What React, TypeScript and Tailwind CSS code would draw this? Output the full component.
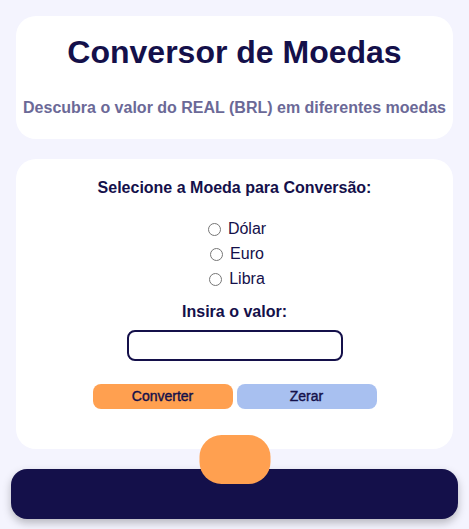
import React from "react";

export default function App() {
  const font = { fontFamily: '"Liberation Sans", Arial, sans-serif' };
  return (
    <div className="min-h-screen w-full bg-[#f4f4fe] pt-4 pb-[10px]" style={font}>
      <div className="mx-4 rounded-[20px] bg-white pt-[18px] pb-[22px] text-center">
        <h1 className="text-[32px] font-bold leading-[36px] text-[#14104a]">Conversor de Moedas</h1>
        <p className="mt-[29px] text-[16px] font-bold leading-[18px] text-[#6b6997]">
          Descubra o valor do REAL (BRL) em diferentes moedas
        </p>
      </div>

      <div className="mx-4 mt-5 rounded-[20px] bg-white pt-5 pb-10 text-center text-[#14104a]">
        <h2 className="text-[16px] font-bold leading-[18px]">Selecione a Moeda para Conversão:</h2>
        <div className="mt-[19px] flex flex-col items-center">
          {["Dólar", "Euro", "Libra"].map((m) => (
            <label key={m} className="flex h-[25px] items-center text-[16px] leading-[25px]">
              <input
                type="radio"
                name="moeda"
                className="ml-[5px] mr-[7px] mt-[1px] h-[13px] w-[13px]"
              />
              {m}
            </label>
          ))}
        </div>
        <h2 className="mt-[12px] text-[16px] font-bold leading-[18px]">Insira o valor:</h2>
        <div className="mt-[9px] flex justify-center">
          <input
            type="text"
            className="h-[31px] w-[216px] rounded-[8px] border-2 border-[#14104a] bg-white outline-none"
          />
        </div>
        <div className="mt-[23px] flex justify-center gap-1">
          <button className="h-[25px] w-[140px] rounded-[8px] bg-[#ffa050] text-[14px] font-medium text-[#14104a] [-webkit-text-stroke:0.4px]">
            Converter
          </button>
          <button className="h-[25px] w-[140px] rounded-[8px] bg-[#a8c0f0] text-[14px] font-medium text-[#14104a] [-webkit-text-stroke:0.4px]">
            Zerar
          </button>
        </div>
      </div>

      <div className="relative mx-[11px] mt-5 h-[50px] rounded-[16px] bg-[#14104a] shadow-[0_4px_8px_rgba(0,0,0,0.25)]">
        <div className="absolute left-1/2 top-[-34px] h-[49px] w-[71px] -translate-x-1/2 rounded-[22px] bg-[#ffa050]" />
      </div>
    </div>
  );
}
